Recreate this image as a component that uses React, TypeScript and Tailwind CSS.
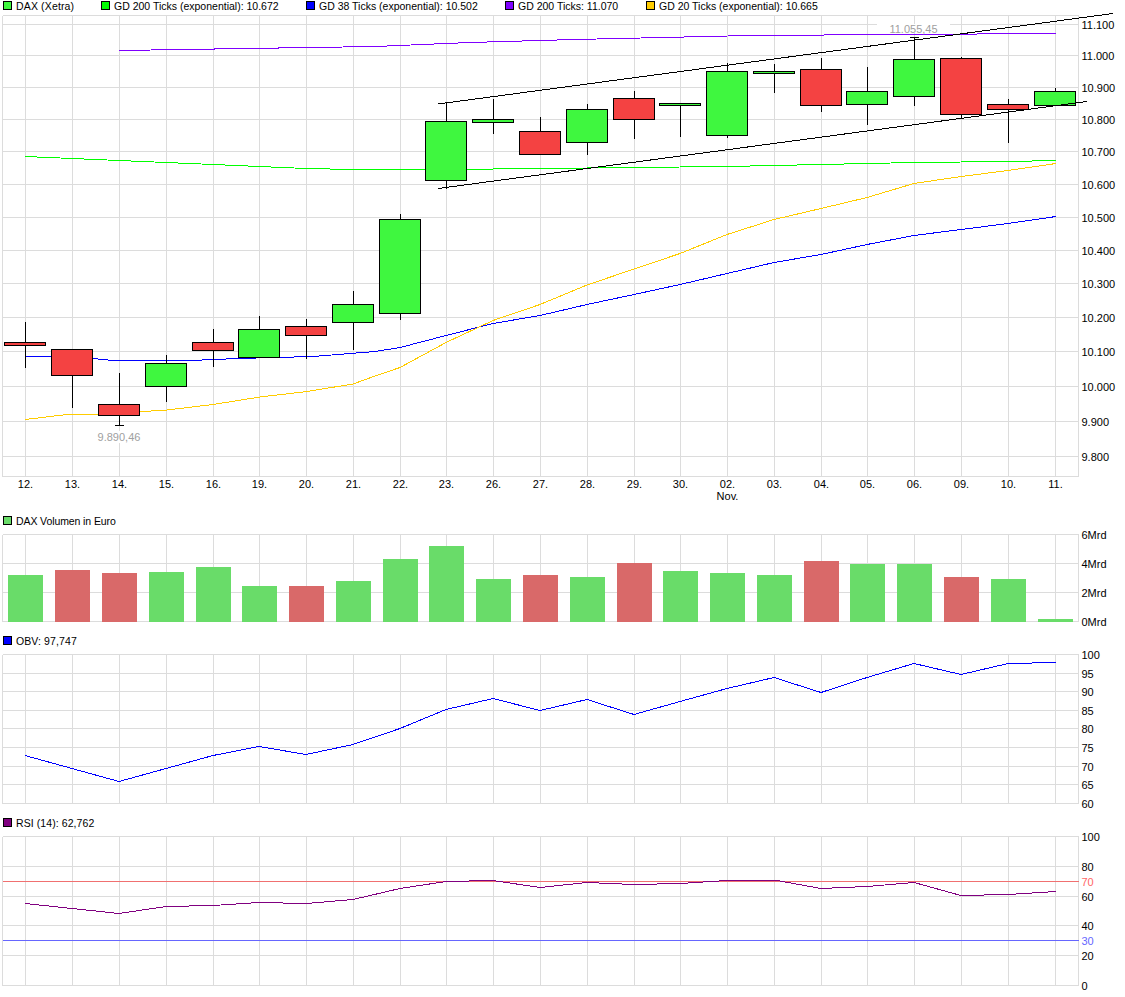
import React from 'react';

const FONT = '"Liberation Sans", Arial, sans-serif';
const GRID = '#dcdcdc';
const LEFT = 2.5;
const RIGHT = 1078.5;

const dayX = [25, 72, 119, 166, 213, 259, 306, 353, 400, 446, 493, 540, 587, 634, 680, 727, 774, 821, 867, 914, 961, 1008, 1055];
const days = ['12.', '13.', '14.', '15.', '16.', '19.', '20.', '21.', '22.', '23.', '26.', '27.', '28.', '29.', '30.', '02.', '03.', '04.', '05.', '06.', '09.', '10.', '11.'];

// wick top, wick bottom, body top, body bottom, up
const candles: [number, number, number, number, boolean][] = [
  [322, 367, 342, 345, false],
  [349, 407, 349, 375, false],
  [373, 425, 404, 415, false],
  [355, 401, 363, 386, true],
  [329, 366, 342, 350, false],
  [316, 357, 329, 357, true],
  [319, 358, 326, 335, false],
  [291, 349, 304, 322, true],
  [214, 319, 219, 313, true],
  [103, 188, 121, 180, true],
  [99, 133, 119, 122, true],
  [117, 154, 131, 154, false],
  [104, 154, 109, 142, true],
  [91, 138, 98, 119, false],
  [103, 136, 103, 105, true],
  [63, 137, 71, 135, true],
  [64, 92, 71, 73, true],
  [58, 111, 69, 105, false],
  [67, 124, 91, 104, true],
  [37, 105, 59, 96, true],
  [57, 118, 58, 114, false],
  [99, 142, 104, 109, false],
  [88, 105, 91, 105, true],
];

const volumes: [number, boolean][] = [
  [575, true], [570, false], [573, false], [572, true], [567, true], [586, true], [586, false], [581, true],
  [559, true], [546, true], [579, true], [575, false], [577, true], [563, false], [571, true], [573, true],
  [575, true], [561, false], [564, true], [564, true], [577, false], [579, true], [619, true],
];

const maPurple = '119,50.5 375,46.5 470,42.5 575,39.5 750,35.5 1056,33.5';
const maGreen = '25,156.5 72,158.5 119,160.5 166,162.5 213,164.5 259,166.5 306,168.5 353,169.5 400,169.5 446,169.5 540,168.5 634,167.5 727,166.5 821,164.5 914,162.5 1008,161.5 1056,160.5';
const maBlue = '25,356.5 50,356.5 93,358.5 113,360.5 190,360.5 238,358.5 313,356.5 375,351.5 400,347.5 446,335.5 493,323.5 540,315.5 587,304.5 634,294.5 680,284.5 727,273.5 774,262.5 821,254.5 867,244.5 914,235.5 961,229.5 1008,223.5 1056,216.5';
const maYellow = '25,419.5 67,414.5 97,414.5 167,410 213,404.5 260,397 307,391.5 353,384 375,376 400,367.5 446,342.5 493,320.5 540,304.5 587,285 634,269 680,253.5 727,234.5 774,219.5 821,208.5 867,197.5 914,183.5 961,176.5 1008,170.5 1056,163.5';
const obvLine = '25,755.5 72,768.5 119,781.5 166,768.5 213,755.5 259,746.5 306,754.5 353,744.5 400,728.5 446,709.5 493,698.5 540,710.5 587,699.5 634,714.5 680,701.5 727,688.5 774,677.5 821,692.5 867,677.5 914,663.5 961,674.5 1008,663.5 1056,662.5';
const rsiLine = '25,903.5 72,908.5 119,913.5 166,906.5 213,905.5 259,902.5 306,903.5 353,899.5 400,888.5 446,881.5 493,880.5 540,887.5 587,882.5 634,884.5 680,883.5 727,880.5 777,880.5 821,888.5 867,886.5 914,882.5 961,895.5 1008,894.5 1056,891.5';

const Legend = ({ items, className }: { items: { label: string; color: string; width: string }[]; className: string }) => (
  <div className={`flex items-start pl-[3px] text-[10.5px] leading-[11px] text-black ${className}`}>
    {items.map((item) => (
      <div key={item.label} className={`flex items-start gap-[4px] shrink-0 ${item.width}`}>
        <span className="block w-[9px] h-[9px] border border-black shrink-0" style={{ backgroundColor: item.color }} />
        <span className="whitespace-nowrap">{item.label}</span>
      </div>
    ))}
  </div>
);

const Grid = ({ rows, top, bottom }: { rows: number[]; top: number; bottom: number }) => (
  <g stroke={GRID} shapeRendering="crispEdges">
    {rows.map((y) => (
      <line key={y} x1={LEFT} x2={RIGHT} y1={y + 0.5} y2={y + 0.5} />
    ))}
    {[LEFT, ...dayX.map((x) => x + 0.5), RIGHT].map((x) => (
      <line key={x} x1={x} x2={x} y1={top + 0.5} y2={bottom + 0.5} />
    ))}
  </g>
);

const Line = ({ points, color }: { points: string; color: string }) => (
  <polyline points={points} fill="none" stroke={color} shapeRendering="crispEdges" />
);

const AxisLabels = ({ labels }: { labels: [string, number, string?][] }) => (
  <g fontSize={11} fontFamily={FONT}>
    {labels.map(([text, y, color]) => (
      <text key={text} x={1081.5} y={y + 4} fill={color ?? '#000'}>{text}</text>
    ))}
  </g>
);

const PriceChart = () => (
  <svg width={1125} height={495} viewBox="0 15 1125 495" className="block overflow-visible">
    <Grid rows={[15, 24, 55, 87, 119, 151, 184, 217, 250, 283, 317, 351, 386, 421, 456, 476]} top={15} bottom={476} />

    <rect x={877} y={24} width={73} height={9} fill="#fff" />
    <rect x={97} y={431} width={44} height={12} fill="#fff" />

    <Line points={maPurple} color="#7f00ff" />
    <Line points={maGreen} color="#00ff00" />
    <Line points={maBlue} color="#0000ff" />
    <Line points={maYellow} color="#ffcc00" />

    <g shapeRendering="crispEdges" stroke="#000">
      {candles.map(([high, low, open, close, up], i) => (
        <g key={days[i] + i}>
          <line x1={dayX[i] + 0.5} x2={dayX[i] + 0.5} y1={high} y2={low + 1} />
          <rect x={dayX[i] - 20.5} y={open + 0.5} width={41} height={close - open} fill={up ? '#3ff73f' : '#f44242'} />
        </g>
      ))}
      <line x1={115} x2={124} y1={425.5} y2={425.5} />
      <line x1={910} x2={919} y1={37.5} y2={37.5} />
      <line x1={438} y1={104} x2={1113} y2={13.5} />
      <line x1={438} y1={188.5} x2={1087} y2={101.5} />
    </g>

    <g fontSize={11} fontFamily={FONT} fill="#a0a0a0" textAnchor="middle">
      <text x={119} y={441}>9.890,46</text>
      <text x={913.5} y={33}>11.055,45</text>
    </g>

    <g fontSize={11} fontFamily={FONT} fill="#000" textAnchor="middle">
      {days.map((d, i) => (
        <text key={d + i} x={dayX[i] + 0.5} y={488}>{d}</text>
      ))}
      <text x={727.5} y={500}>Nov.</text>
    </g>

    <AxisLabels
      labels={[
        ['11.100', 25], ['11.000', 56], ['10.900', 88], ['10.800', 120], ['10.700', 152], ['10.600', 185], ['10.500', 218],
        ['10.400', 251], ['10.300', 284], ['10.200', 318], ['10.100', 352], ['10.000', 387], ['9.900', 422], ['9.800', 457],
      ]}
    />
  </svg>
);

const VolumeChart = () => (
  <svg width={1125} height={102} viewBox="0 534 1125 102" className="block overflow-visible">
    <Grid rows={[534, 563, 592, 621]} top={534} bottom={621} />
    <g shapeRendering="crispEdges">
      {volumes.map(([top, up], i) => (
        <rect key={days[i] + i} x={dayX[i] - 17} y={top} width={35} height={622 - top} fill={up ? '#69dc69' : '#d96969'} />
      ))}
    </g>
    <AxisLabels labels={[['6Mrd', 535], ['4Mrd', 564], ['2Mrd', 593], ['0Mrd', 622]]} />
  </svg>
);

const ObvChart = () => (
  <svg width={1125} height={164} viewBox="0 654 1125 164" className="block overflow-visible">
    <Grid rows={[654, 673, 691, 710, 728, 747, 766, 784, 803]} top={654} bottom={803} />
    <Line points={obvLine} color="#0000ff" />
    <AxisLabels
      labels={[['100', 655], ['95', 674], ['90', 692], ['85', 711], ['80', 729], ['75', 748], ['70', 767], ['65', 785], ['60', 804]]}
    />
  </svg>
);

const RsiChart = () => (
  <svg width={1125} height={161} viewBox="0 836 1125 161" className="block overflow-visible">
    <Grid rows={[836, 866, 896, 925, 955, 985]} top={836} bottom={985} />
    <g shapeRendering="crispEdges">
      <line x1={LEFT} x2={RIGHT} y1={881.5} y2={881.5} stroke="#f07070" />
      <line x1={LEFT} x2={RIGHT} y1={940.5} y2={940.5} stroke="#6666ff" />
    </g>
    <Line points={rsiLine} color="#800080" />
    <AxisLabels
      labels={[
        ['100', 837], ['80', 867], ['70', 882, '#ff6666'], ['60', 897], ['40', 926], ['30', 941, '#6666ff'], ['20', 956], ['0', 986],
      ]}
    />
  </svg>
);

const App: React.FC = () => (
  <div className="w-[1125px] h-[997px] overflow-hidden bg-white" style={{ fontFamily: FONT }}>
    <Legend
      className="h-[15px] pt-[1px]"
      items={[
        { label: 'DAX (Xetra)', color: '#3ff73f', width: 'w-[98px] tracking-[0.15px]' },
        { label: 'GD 200 Ticks (exponential): 10.672', color: '#00ff00', width: 'w-[205px]' },
        { label: 'GD 38 Ticks (exponential): 10.502', color: '#0000ff', width: 'w-[199px]' },
        { label: 'GD 200 Ticks: 11.070', color: '#7f00ff', width: 'w-[141px]' },
        { label: 'GD 20 Ticks (exponential): 10.665', color: '#ffcc00', width: 'w-[200px]' },
      ]}
    />
    <PriceChart />

    <Legend className="h-[24px] pt-[6px]" items={[{ label: 'DAX Volumen in Euro', color: '#69dc69', width: 'w-[200px] tracking-[-0.1px]' }]} />
    <VolumeChart />

    <Legend className="h-[18px]" items={[{ label: 'OBV: 97,747', color: '#0000ff', width: 'w-[200px] tracking-[0.1px]' }]} />
    <ObvChart />

    <Legend className="h-[18px]" items={[{ label: 'RSI (14): 62,762', color: '#800080', width: 'w-[200px] tracking-[0.08px]' }]} />
    <RsiChart />
  </div>
);

export default App;
